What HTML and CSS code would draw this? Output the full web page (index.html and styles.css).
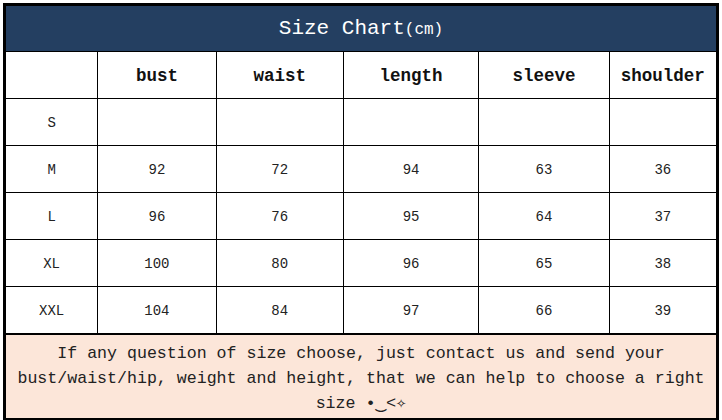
FILE: index.html
```html
<!DOCTYPE html>
<html>
<head>
<meta charset="utf-8">
<link rel="stylesheet" href="styles.css">
</head>
<body>
<div class="page">
<table class="chart">
<colgroup>
<col class="c0"><col class="c1"><col class="c2"><col class="c3"><col class="c4"><col class="c5">
</colgroup>
<tr class="title-row"><th colspan="6" class="title">Size Chart<span class="unit">(cm)</span></th></tr>
<tr class="head-row"><td></td><td>bust</td><td>waist</td><td>length</td><td>sleeve</td><td>shoulder</td></tr>
<tr class="row"><td>S</td><td></td><td></td><td></td><td></td><td></td></tr>
<tr class="row"><td>M</td><td>92</td><td>72</td><td>94</td><td>63</td><td>36</td></tr>
<tr class="row"><td>L</td><td>96</td><td>76</td><td>95</td><td>64</td><td>37</td></tr>
<tr class="row"><td>XL</td><td>100</td><td>80</td><td>96</td><td>65</td><td>38</td></tr>
<tr class="row"><td>XXL</td><td>104</td><td>84</td><td>97</td><td>66</td><td>39</td></tr>
<tr class="note-row"><td colspan="6" class="note">If any question of size choose, just contact us and send your<br>bust/waist/hip, weight and height, that we can help to choose a right<br>size <span class="emo">•‿&lt;✧</span></td></tr>
</table>
</div>
</body>
</html>
```
FILE: styles.css
```css
html, body { margin: 0; padding: 0; background: #fff; }
.page { padding: 3px 0 0 3px; }
.chart {
  border-collapse: collapse;
  border: 3px solid #000;
  width: 716px;
  table-layout: fixed;
  font-family: "Liberation Mono", "DejaVu Sans Mono", monospace;
  color: #111;
}
.c0 { width: 93px; }
.c1 { width: 118px; }
.c2 { width: 127px; }
.c3 { width: 135px; }
.c4 { width: 130px; }
.c5 { width: 108px; }
.chart td, .chart th {
  border: 1px solid #000;
  padding: 0;
  text-align: center;
  vertical-align: middle;
}
.title {
  background: #243f61;
  color: #fff;
  font-weight: normal;
  font-size: 21px;
  height: 45px;
  padding-top: 2px;
}
.unit { font-size: 16px; }
.head-row td { height: 44px; font-size: 17.5px; font-weight: bold; padding-top: 2px; }
.row td { height: 44px; font-size: 14px; color: #222; padding-top: 2px; }
.note-row td { border-top: 2px solid #000; }
.chart .note {
  background: #fce6d9;
  font-size: 16.6px;
  line-height: 25px;
  height: 77px;
  color: #222;
  padding-top: 6px;
  vertical-align: top;
}
.emo { font-size: 17px; }
```
